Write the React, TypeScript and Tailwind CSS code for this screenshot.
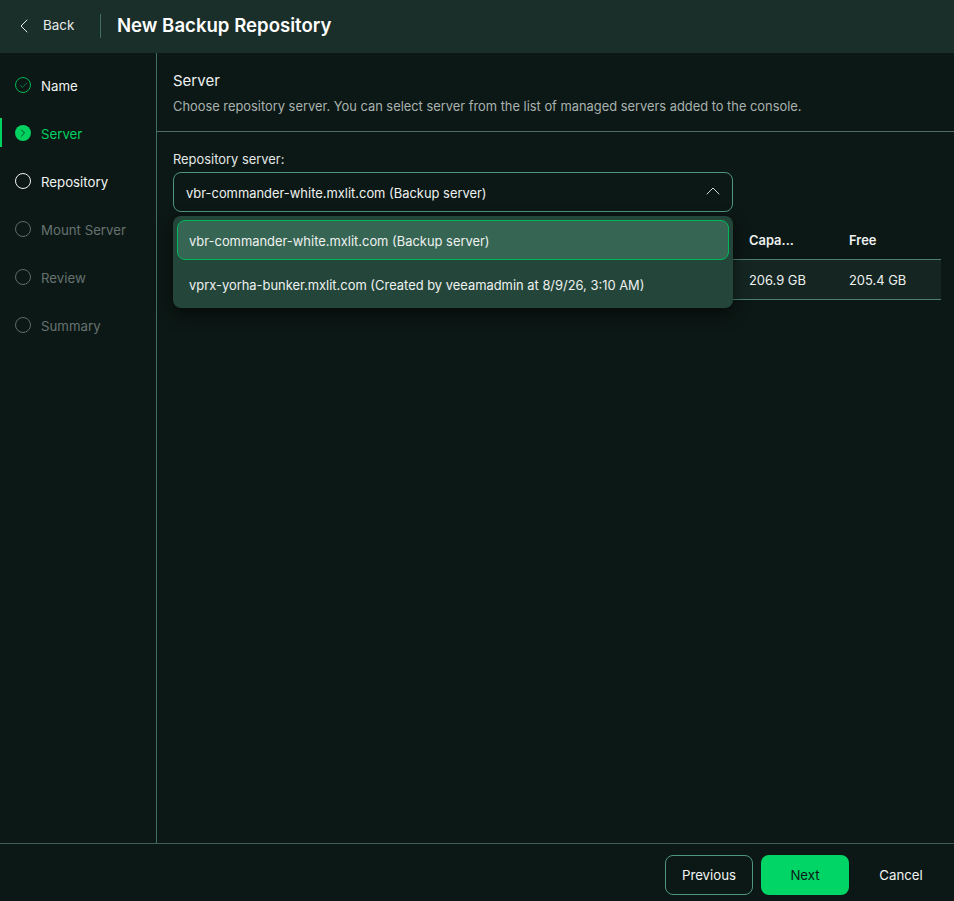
import { ChevronLeft, ChevronRight, ChevronUp, Check } from 'lucide-react'

const steps = [
  { label: 'Name', state: 'done' },
  { label: 'Server', state: 'active' },
  { label: 'Repository', state: 'next' },
  { label: 'Mount Server', state: 'off' },
  { label: 'Review', state: 'off' },
  { label: 'Summary', state: 'off' },
]

function StepIcon({ state }: { state: string }) {
  if (state === 'done') {
    return (
      <span className="w-4 h-4 rounded-full border border-[#00b454] flex items-center justify-center">
        <Check size={9} strokeWidth={1.5} className="text-[#00c75a]" />
      </span>
    )
  }
  if (state === 'active') {
    return (
      <span className="w-4 h-4 rounded-full bg-[#00d15f] flex items-center justify-center">
        <ChevronRight size={12} strokeWidth={1.5} className="text-[#0d1a16]" />
      </span>
    )
  }
  if (state === 'next') return <span className="w-4 h-4 rounded-full border-[1.5px] border-[#f0f2f1]" />
  return <span className="w-4 h-4 rounded-full border-[1.5px] border-[#5f6a67]" />
}

export default function App() {
  return (
    <div className="w-[954px] h-[901px] flex flex-col bg-[#0c1815] text-[#eef1f0] font-['Inter',sans-serif] text-[12.92px] overflow-hidden">
      {/* header */}
      <header className="h-[53px] shrink-0 bg-[#1b2f2a] flex items-center pb-[2px]">
        <div className="w-[101px] h-[24px] border-r border-[#3f6f60] flex items-center pl-[12px] gap-[7px] text-[13.4px] text-[#e8ebea]">
          <ChevronLeft size={24} strokeWidth={1} />
          <span>Back</span>
        </div>
        <h1 className="ml-4 mb-[2px] text-[18.6px] leading-6 font-semibold text-white">New Backup Repository</h1>
      </header>

      <div className="flex-1 flex min-h-0">
        {/* steps */}
        <nav className="w-[157px] shrink-0 border-r border-[#3f6f60] pt-[8px] text-[13.25px]">
          {steps.map((s) => (
            <div
              key={s.label}
              className={`relative h-12 flex items-center gap-[10px] pl-[15px] ${s.state === 'active' ? 'text-[#00d15f]' : ''} ${s.state === 'off' ? 'text-[#667270]' : ''} ${s.state === 'done' || s.state === 'next' ? 'text-[#f2f4f3]' : ''}`}
            >
              {s.state === 'active' && <span className="absolute left-0 top-[9px] w-[2px] h-[29px] bg-[#00d15f]" />}
              <StepIcon state={s.state} />
              <span className="pt-[4px]">{s.label}</span>
            </div>
          ))}
        </nav>

        {/* main */}
        <main className="flex-1 min-w-0">
          <div className="h-[79px] border-b border-[#4f6f65] px-4 pt-[17px]">
            <h2 className="text-[15px] leading-[22px]">Server</h2>
            <p className="mt-[5px] text-[12.87px] leading-5 text-[#a9b2af] whitespace-nowrap">
              Choose repository server. You can select server from the list of managed servers added to the console.
            </p>
          </div>

          <div className="pl-4 pr-[13px] pt-[18px]">
            <label className="block leading-5 text-[12.9px] text-[#e3e7e5]">Repository server:</label>
            <div className="relative mt-[2px] w-[560px]">
              <div className="h-10 rounded-lg border border-[#4f9580] flex items-center justify-between pl-3 pr-[7px]">
                <span className="pt-[4px]">vbr-commander-white.mxlit.com (Backup server)</span>
                <ChevronUp size={24} strokeWidth={1} className="mb-[2px] text-[#d5dad8]" />
              </div>

              {/* open dropdown */}
              <div className="absolute z-10 left-0 right-0 top-[44px] h-[92px] rounded-lg bg-[#24463a] p-1 shadow-[0_6px_16px_rgba(0,0,0,0.55)]">
                <div className="h-10 rounded-lg border border-[#00b85a] bg-[#366553] flex items-center px-[11px] pt-[4px]">
                  vbr-commander-white.mxlit.com (Backup server)
                </div>
                <div className="mt-[3px] h-11 flex items-center px-3 pt-[2px]">
                  vprx-yorha-bunker.mxlit.com (Created by veeamadmin at 8/9/26, 3:10 AM)
                </div>
              </div>
            </div>

            {/* table */}
            <div className="mt-2">
              <div className="h-10 flex items-center font-semibold border-b border-[#4f7f70] pt-[2px]">
                <span className="ml-[576px] w-[100px]">Capa...</span>
                <span>Free</span>
              </div>
              <div className="h-10 flex items-center bg-[#152622] border-b border-[#4f7f70] pt-[2px]">
                <span className="ml-[576px] w-[100px]">206.9 GB</span>
                <span>205.4 GB</span>
              </div>
            </div>
          </div>
        </main>
      </div>

      {/* footer */}
      <footer className="h-[58px] shrink-0 border-t border-[#3f5f55] flex items-start justify-end pt-[11px] pr-[9px] gap-2 text-[13.25px]">
        <button className="w-[88px] h-10 rounded-lg border border-[#4f9580] text-[#f2f4f3] pt-[2px]">Previous</button>
        <button className="w-[88px] h-10 rounded-lg bg-[#00d566] text-[#0d1a16] pt-[2px]">Next</button>
        <button className="w-[88px] h-10 rounded-lg text-[#f2f4f3] pt-[2px]">Cancel</button>
      </footer>
    </div>
  )
}
